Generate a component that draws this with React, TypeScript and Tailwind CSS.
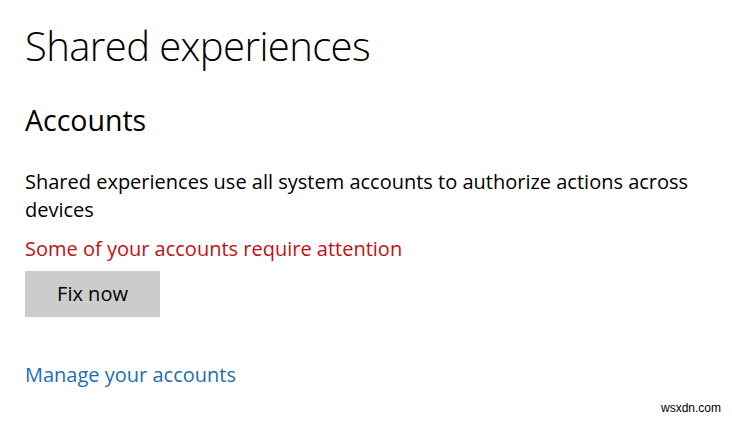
export default function App() {
  return (
    <div
      className="relative h-[421px] w-[732px] overflow-hidden bg-white text-black"
      style={{ fontFamily: '"Open Sans", "Noto Sans", sans-serif' }}
    >
      <div className="flex flex-col pl-[25px] pt-[18px]">
        <h1 className="text-[40px] font-light leading-[56px] tracking-[-0.6px]">
          Shared experiences
        </h1>
        <h2 className="mt-[28px] text-[28.5px] font-normal leading-[36px]">
          Accounts
        </h2>
        <p className="mt-[30px] w-[690px] text-[20px] leading-[28px]">
          Shared experiences use all system accounts to authorize actions across
          devices
        </p>
        <p className="mt-[11px] text-[20px] leading-[28px] text-[#c40e14]">
          Some of your accounts require attention
        </p>
        <button className="mt-[8px] flex h-[46px] w-[135px] items-center justify-center bg-[#cccccc] text-[20px]">
          Fix now
        </button>
        <a className="mt-[44px] text-[20px] leading-[28px] text-[#1e6db1]">
          Manage your accounts
        </a>
      </div>
      <span
        className="absolute bottom-[4px] right-[11px] text-[12px] text-black"
        style={{ fontFamily: '"Liberation Sans", Arial, sans-serif' }}
      >
        wsxdn.com
      </span>
    </div>
  );
}
